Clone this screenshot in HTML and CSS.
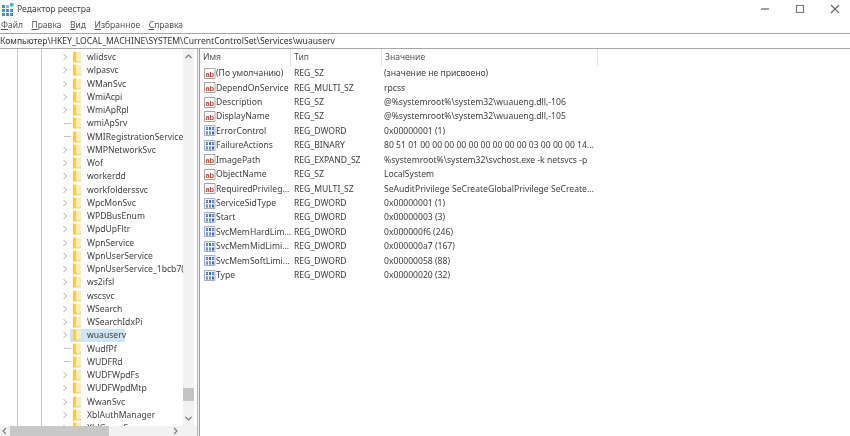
FILE: index.html
```html
<!DOCTYPE html>
<html lang="ru">
<head>
<meta charset="utf-8">
<title>Редактор реестра</title>
<link rel="stylesheet" href="styles.css">
</head>
<body>
<svg class="defs" width="0" height="0">
  <defs>
    <symbol id="folder" viewBox="0 0 9 12">
      <path d="M0 0h9v12H0z" fill="#fcedb4"/>
      <path d="M0 0h3.500v12H0z" fill="#f3cb58"/>
      <path d="M0 11.500h9" stroke="#eccb6d" stroke-width="1"/>
    </symbol>
    <symbol id="chev" viewBox="0 0 6 8">
      <path d="M1.500 1l3 3-3 3" fill="none" stroke="#a6a6a6" stroke-width="1"/>
    </symbol>
    <symbol id="sz" viewBox="0 0 13 13">
      <path d="M1.500 1.500h10.500v10H1.500z" fill="#fff" stroke="#a9a4a4"/>
      <text x="6.800" y="9.500" class="ab">ab</text>
    </symbol>
    <symbol id="dw" viewBox="0 0 13 13">
      <path d="M1.500 1.500h10.500v10H1.500z" fill="#eef2fa" stroke="#a4aec4"/>
      <path d="M3 3h2v3H3zM6 3h2v3H6zM9 3h2v3H9zM3 7.500h2v3H3zM6 7.500h2v3H6zM9 7.500h2v3H9z" fill="#3a6cbd"/>
      <path d="M3.600 3.700h.8v1.600h-.8zM6.600 8.200h.8v1.600h-.8zM9.600 3.700h.8v1.600h-.8zM3.600 8.200h.8v1.600h-.8z" fill="#eef2fa"/>
    </symbol>
  </defs>
</svg>

<header class="titlebar">
  <svg class="app-icon" width="13" height="14" viewBox="0 0 13 14">
    <path d="M1 3h3v3H1zM1 7h3v3H1zM1 11h3v3H1zM5 7h3v3H5zM5 11h3v3H5zM9 11h3v3H9zM9 7h3v3H9z" fill="#3f94c8"/>
    <path d="M5 3h3v3H5z" fill="#7fc0e2"/>
    <path d="M9 1h3.500v3.500H9z" fill="#4ab0d8"/>
  </svg>
  <span class="title-text">Редактор реестра</span>
  <div class="window-buttons">
    <svg class="win-btn" width="30" height="14" viewBox="0 0 30 14"><path d="M11 7h8" stroke="#666" stroke-width="1.200"/></svg>
    <svg class="win-btn" width="30" height="14" viewBox="0 0 30 14"><path d="M11.500 3.500h7v7h-7z" fill="none" stroke="#777" stroke-width="1.200"/></svg>
    <svg class="win-btn" width="30" height="14" viewBox="0 0 30 14"><path d="M11 3l8 8M19 3l-8 8" stroke="#666" stroke-width="1.100"/></svg>
  </div>
</header>

<nav class="menubar">
  <span class="menu-item"><u>Ф</u>айл</span>
  <span class="menu-item"><u>П</u>равка</span>
  <span class="menu-item"><u>В</u>ид</span>
  <span class="menu-item"><u>И</u>збранное</span>
  <span class="menu-item"><u>С</u>правка</span>
</nav>

<div class="address">Компьютер\HKEY_LOCAL_MACHINE\SYSTEM\CurrentControlSet\Services\wuauserv</div>

<main class="panes">
  <section class="tree-pane">
    <div class="tree-view">
      <div class="guide guide-a"></div>
      <div class="guide guide-b"></div>
      <ul class="tree" id="tree"></ul>
      <div class="vscroll">
        <svg class="sb-arrow" width="11" height="9" viewBox="0 0 11 9"><path d="M2.500 6l3-3 3 3" fill="none" stroke="#777" stroke-width="1.100"/></svg>
        <div class="vtrack"><div class="vthumb"></div></div>
        <svg class="sb-arrow" width="11" height="9" viewBox="0 0 11 9"><path d="M2.500 3l3 3 3-3" fill="none" stroke="#777" stroke-width="1.100"/></svg>
      </div>
    </div>
    <div class="hscroll">
      <svg class="sb-arrow" width="10" height="10" viewBox="0 0 10 10"><path d="M6 2L3 5l3 3" fill="none" stroke="#777" stroke-width="1.100"/></svg>
      <div class="htrack"><div class="hthumb"></div></div>
      <svg class="sb-arrow" width="10" height="10" viewBox="0 0 10 10"><path d="M4 2l3 3-3 3" fill="none" stroke="#777" stroke-width="1.100"/></svg>
      <div class="corner"></div>
    </div>
  </section>
  <div class="splitter"></div>
  <section class="list-pane">
    <div class="list-head">
      <span class="col col-name">Имя</span>
      <span class="col col-type">Тип</span>
      <span class="col col-value">Значение</span>
    </div>
    <div id="rows"></div>
  </section>
</main>
<script src="app.js"></script>
</body>
</html>
```
FILE: styles.css
```css
* { box-sizing: border-box; }
html, body { margin: 0; height: 100%; }
body {
  width: 850px;
  height: 436px;
  overflow: hidden;
  background: #fff;
  color: #3a3a3a;
  font: 8.600px/12px "Noto Sans", "Open Sans", sans-serif;
  display: flex;
  flex-direction: column;
  filter: blur(0.35px);
}
.defs { position: absolute; }
.ab { font: bold 7.500px "Liberation Sans", sans-serif; fill: #c8452c; text-anchor: middle; }

.titlebar { height: 17px; display: flex; align-items: center; flex: none; }
.app-icon { margin-left: 1px; }
.title-text { margin-left: 3px; font-size: 8.600px; color: #444; }
.window-buttons { margin-left: auto; display: flex; gap: 5px; }

.menubar { height: 16px; display: flex; align-items: center; gap: 8.500px; flex: none; padding-left: 1px; font-size: 8.500px; color: #555; }
.menu-item u { text-underline-offset: 1px; }

.address {
  height: 16px;
  flex: none;
  border-top: 1px solid #a6a6a6;
  border-bottom: 1px solid #a6a6a6;
  line-height: 14px;
  font-size: 8.600px;
  color: #333;
  white-space: nowrap;
}

.panes { flex: 1; display: flex; min-height: 0; }

.tree-pane { width: 197px; flex: none; display: flex; flex-direction: column; min-height: 0; }
.tree-view { flex: 1; position: relative; display: flex; min-height: 0; overflow: hidden; }
.guide { position: absolute; top: 0; bottom: 0; width: 1px; background: #c8c8c8; }
.guide-a { left: 17px; }
.guide-b { left: 41px; }
.tree { list-style: none; margin: 0; padding: 1.500px 0 0 62px; flex: 1; min-width: 0; overflow: hidden; }
.node { height: 13.260px; display: flex; align-items: center; white-space: nowrap; position: relative; }
.chev { width: 6px; height: 8px; flex: none; margin-right: 5px; }
.leaf-line { width: 7px; height: 1px; background: #c4c4c4; flex: none; margin: 0 2px 0 2px; }
.folder { width: 8px; height: 12px; flex: none; margin-right: 6px; }
.node-label { color: #404040; }
.node-selected::before { content: ""; position: absolute; left: 8px; top: 0; bottom: 0; width: 55px; background: #cfe6f7; }
.node-selected > * { position: relative; }

.vscroll { width: 11px; flex: none; background: #f2f2f2; display: flex; flex-direction: column; align-items: center; margin-right: 3px; }
.vtrack { flex: 1; width: 100%; padding-top: 324px; }
.vthumb { height: 13px; background: #c4c4c4; }
.sb-arrow { flex: none; margin: 3px 0; }

.hscroll { height: 10px; flex: none; background: #f2f2f2; display: flex; align-items: center; }
.hscroll .sb-arrow { margin: 0; }
.htrack { width: 160px; flex: none; height: 100%; }
.hthumb { width: 99px; height: 100%; background: #c8c8c8; }
.corner { flex: 1; height: 100%; background: #f2f2f2; }

.splitter { width: 3px; flex: none; border-left: 1px solid #b4b4b4; border-right: 1px solid #9c9c9c; background: #f2f2f2; }

.list-pane { flex: 1; padding-left: 1px; min-width: 0; }
.list-head { height: 17px; display: flex; align-items: center; color: #555; }
.col { flex: none; white-space: nowrap; }
.list-head .col { border-right: 1px solid #e3e3e3; height: 100%; line-height: 17px; }
.col-name { width: 90px; padding-left: 2px; }
.col-type { width: 91px; padding-left: 3px; }
.col-value { width: 216px; padding-left: 3px; }
.row { height: 14.430px; display: flex; align-items: center; white-space: nowrap; color: #404040; padding-left: 2px; }
.row-name { width: 91px; flex: none; display: flex; align-items: center; overflow: hidden; }
.row-icon { width: 13px; height: 13px; flex: none; }
.row-type { width: 90px; flex: none; }
.row-value { flex: none; width: 260px; overflow: hidden; }
```
FILE: app.js
```js
var nodes = ["wlidsvc","wlpasvc","WManSvc","WmiAcpi","WmiApRpl","wmiApSrv","WMIRegistrationService","WMPNetworkSvc","Wof","workerdd","workfolderssvc","WpcMonSvc","WPDBusEnum","WpdUpFltr","WpnService","WpnUserService","WpnUserService_1bcb7(","ws2ifsl","wscsvc","WSearch","WSearchIdxPi","wuauserv","WudfPf","WUDFRd","WUDFWpdFs","WUDFWpdMtp","WwanSvc","XblAuthManager","XblGameSave"];
var leaves = {"wmiApSrv":1,"WMIRegistrationService":1,"WudfPf":1,"WUDFRd":1};
var tree = document.getElementById("tree");
tree.innerHTML = nodes.map(function (n) {
  var lead = leaves[n] ? '<span class="leaf-line"></span>' : '<svg class="chev"><use href="#chev"/></svg>';
  var cls = n === "wuauserv" ? "node node-selected" : "node";
  return '<li class="' + cls + '">' + lead + '<svg class="folder"><use href="#folder"/></svg><span class="node-label">' + n + '</span></li>';
}).join("");

var rows = [
  ["sz","(По умолчанию)","REG_SZ","(значение не присвоено)"],
  ["sz","DependOnService","REG_MULTI_SZ","rpcss"],
  ["sz","Description","REG_SZ","@%systemroot%\\system32\\wuaueng.dll,-106"],
  ["sz","DisplayName","REG_SZ","@%systemroot%\\system32\\wuaueng.dll,-105"],
  ["dw","ErrorControl","REG_DWORD","0x00000001 (1)"],
  ["dw","FailureActions","REG_BINARY","80 51 01 00 00 00 00 00 00 00 00 00 03 00 00 00 14..."],
  ["sz","ImagePath","REG_EXPAND_SZ","%systemroot%\\system32\\svchost.exe -k netsvcs -p"],
  ["sz","ObjectName","REG_SZ","LocalSystem"],
  ["sz","RequiredPrivileg...","REG_MULTI_SZ","SeAuditPrivilege SeCreateGlobalPrivilege SeCreate..."],
  ["dw","ServiceSidType","REG_DWORD","0x00000001 (1)"],
  ["dw","Start","REG_DWORD","0x00000003 (3)"],
  ["dw","SvcMemHardLim...","REG_DWORD","0x000000f6 (246)"],
  ["dw","SvcMemMidLimi...","REG_DWORD","0x000000a7 (167)"],
  ["dw","SvcMemSoftLimi...","REG_DWORD","0x00000058 (88)"],
  ["dw","Type","REG_DWORD","0x00000020 (32)"]
];
document.getElementById("rows").innerHTML = rows.map(function (r) {
  return '<div class="row"><span class="row-name"><svg class="row-icon"><use href="#' + r[0] + '"/></svg>' + r[1] + '</span><span class="row-type">' + r[2] + '</span><span class="row-value">' + r[3] + '</span></div>';
}).join("");
```
